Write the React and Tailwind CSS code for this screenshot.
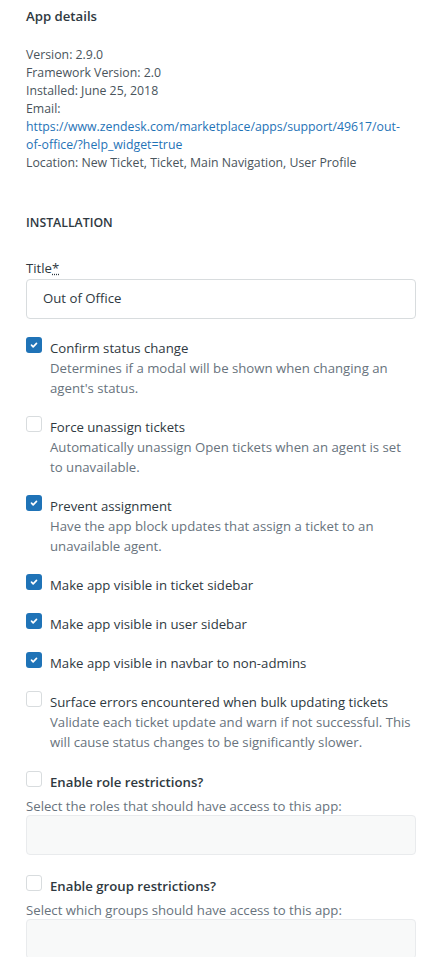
import React from 'react';

const options = [
  { label: 'Confirm status change', desc: "Determines if a modal will be shown when changing an agent's status.", checked: true },
  { label: 'Force unassign tickets', desc: 'Automatically unassign Open tickets when an agent is set to unavailable.', checked: false },
  { label: 'Prevent assignment', desc: 'Have the app block updates that assign a ticket to an unavailable agent.', checked: true },
  { label: 'Make app visible in ticket sidebar', checked: true },
  { label: 'Make app visible in user sidebar', checked: true },
  { label: 'Make app visible in navbar to non-admins', checked: true },
  { label: 'Surface errors encountered when bulk updating tickets', desc: 'Validate each ticket update and warn if not successful. This will cause status changes to be significantly slower.', checked: false },
];

function Checkbox({ checked }) {
  if (checked) {
    return (
      <span className="mt-[-1px] flex h-4 w-4 shrink-0 items-center justify-center rounded-[3px] bg-[#1f73b7]">
        <svg width="10" height="10" viewBox="0 0 12 12" fill="none">
          <path d="M3 6.2l2 2L9 4" stroke="white" strokeWidth="2" strokeLinecap="round" strokeLinejoin="round" />
        </svg>
      </span>
    );
  }
  return <span className="mt-[-1px] h-4 w-4 shrink-0 rounded-[3px] border border-[#d8dcde] bg-white" />;
}

function Option({ label, desc, checked, bold }) {
  return (
    <div className="flex gap-2">
      <Checkbox checked={checked} />
      <div className="text-[13.2px] leading-[20px]">
        <div className={bold ? 'font-semibold text-[#2f3941]' : 'text-[#2f3941]'}>{label}</div>
        {desc && <div className="text-[#68737d]">{desc}</div>}
      </div>
    </div>
  );
}

export default function App() {
  return (
    <div
      className="h-[957px] w-[442px] overflow-hidden bg-white px-[26px] pt-[6px] text-[#2f3941]"
      style={{ fontFamily: '"Open Sans", "Noto Sans", sans-serif' }}
    >
      <h2 className="text-[13.2px] font-semibold leading-[20px] text-[#2f3941]">App details</h2>

      <div className="mt-[20px] max-w-[385px] text-[12.3px] leading-[18px] text-[#49545c]">
        <div>Version: 2.9.0</div>
        <div>Framework Version: 2.0</div>
        <div>Installed: June 25, 2018</div>
        <div>Email:</div>
        <a className="block text-[#1f73b7]" href="#">
          https://www.zendesk.com/marketplace/apps/support/49617/out-of-office/?help_widget=true
        </a>
        <div>Location: New Ticket, Ticket, Main Navigation, User Profile</div>
      </div>

      <h3 className="mt-[41px] text-[12.3px] font-semibold leading-[20px] text-[#2f3941]">INSTALLATION</h3>

      <label className="mt-[25px] block text-[13.2px] leading-[20px] text-[#2f3941]">
        Title<abbr className="underline decoration-dotted" title="required">*</abbr>
      </label>
      <div className="mt-[1px] flex h-[40px] items-center rounded-[4px] border border-[#d8dcde] px-4 text-[13.2px] text-[#2f3941]">
        Out of Office
      </div>

      <div className="mt-[19px] flex flex-col gap-[19px]">
        {options.map((o) => (
          <Option key={o.label} {...o} />
        ))}
      </div>

      <div className="mt-[20px]">
        <Option label="Enable role restrictions?" checked={false} bold />
        <div className="mt-[5px] text-[13.2px] leading-[18px] text-[#68737d]">Select the roles that should have access to this app:</div>
        <div className="h-[40px] rounded-[4px] border border-[#e9ebed] bg-[#f8f9f9]" />
      </div>

      <div className="mt-[21px]">
        <Option label="Enable group restrictions?" checked={false} bold />
        <div className="mt-[5px] text-[13.2px] leading-[18px] text-[#68737d]">Select which groups should have access to this app:</div>
        <div className="h-[40px] rounded-[4px] border border-[#e9ebed] bg-[#f8f9f9]" />
      </div>
    </div>
  );
}
